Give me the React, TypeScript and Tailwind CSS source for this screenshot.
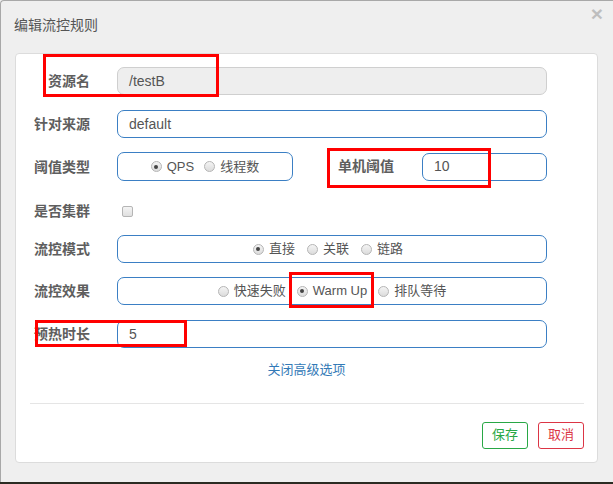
import React from "react";

const LABEL =
  "w-[74px] shrink-0 text-right text-[14px] font-bold text-[#5e5e5e] leading-none";
const BOX = "border border-[#3b7fc4] rounded-[7px] bg-white";

const Radio = ({ checked, label }: { checked?: boolean; label: string }) => (
  <span className="flex items-center">
    <span className="w-[11px] h-[11px] rounded-full border border-[#b5b5b5] bg-gradient-to-b from-[#f4f4f4] to-[#dcdcdc] flex items-center justify-center">
      {checked && <span className="w-[4px] h-[4px] rounded-full bg-[#444]" />}
    </span>
    <span className="ml-[5px] text-[13px] text-[#555]">{label}</span>
  </span>
);

const Row = ({
  label,
  children,
  className = "",
}: {
  label: string;
  children: React.ReactNode;
  className?: string;
}) => (
  <div className={`flex items-center ${className}`}>
    <div className={LABEL}>{label}</div>
    <div className="ml-[27px] flex-1 flex items-center">{children}</div>
  </div>
);

const App: React.FC = () => {
  return (
    <div
      className="relative w-[613px] h-[484px] overflow-hidden bg-[#efefef]"
      style={{ fontFamily: '"Liberation Sans", "Noto Sans CJK SC", sans-serif' }}
    >
      <div className="h-[482px] border-l border-t border-[#a8a8a8] rounded-tl-[4px] flex flex-col">
        {/* header */}
        <div className="h-[52px] flex items-center justify-between pl-[13px] pr-[10px] pb-[4px]">
          <span className="text-[14px] text-[#555]">编辑流控规则</span>
          <span className="text-[21px] font-bold text-black opacity-20 leading-none -mt-[24px]">
            ×
          </span>
        </div>

        {/* body panel */}
        <div className="ml-[14px] mr-[15px] h-[410px] bg-white border border-[#dcdcdc] rounded-[4px] pt-[13px] pr-[50px]">
          <Row label="资源名">
            <div className="h-[28px] w-full border border-[#cfcfcf] rounded-[7px] bg-[#eeeeee] flex items-center pl-[11px] text-[14px] text-[#555]">
              /testB
            </div>
          </Row>

          <Row label="针对来源" className="mt-[15px]">
            <div className={`h-[28px] w-full ${BOX} flex items-center pl-[11px] text-[14px] text-[#555]`}>
              default
            </div>
          </Row>

          <Row label="阈值类型" className="mt-[14px]">
            <div className={`h-[29px] w-[176px] ${BOX} flex items-center justify-center gap-[10px]`}>
              <Radio checked label="QPS" />
              <Radio label="线程数" />
            </div>
            <div className="ml-[45px] text-[14px] font-bold text-[#5e5e5e]">单机阈值</div>
            <div className={`ml-[28px] h-[28px] flex-1 ${BOX} flex items-center pl-[11px] text-[14px] text-[#555]`}>
              10
            </div>
          </Row>

          <Row label="是否集群" className="mt-[20px] h-[20px]">
            <span className="ml-[5px] w-[11px] h-[11px] rounded-[2px] border border-[#b5b5b5] bg-gradient-to-b from-[#f4f4f4] to-[#e0e0e0]" />
          </Row>

          <Row label="流控模式" className="mt-[14px]">
            <div className={`h-[28px] w-full ${BOX} flex items-center justify-center gap-[12px] pr-[8px]`}>
              <Radio checked label="直接" />
              <Radio label="关联" />
              <Radio label="链路" />
            </div>
          </Row>

          <Row label="流控效果" className="mt-[14px]">
            <div className={`h-[28px] w-full ${BOX} flex items-center justify-center gap-[11px]`}>
              <Radio label="快速失败" />
              <Radio checked label="Warm Up" />
              <Radio label="排队等待" />
            </div>
          </Row>

          <Row label="预热时长" className="mt-[15px]">
            <div className={`h-[28px] w-full ${BOX} flex items-center pl-[11px] text-[14px] text-[#555]`}>
              5
            </div>
          </Row>

          <div className="mr-[-50px] mt-[12px] text-center text-[13px] text-[#337ab7]">
            关闭高级选项
          </div>

          <div className="ml-[14px] mr-[-37px] mt-[23px] border-t border-[#e5e5e5]" />

          <div className="mr-[-37px] mt-[18px] flex justify-end gap-[10px]">
            <button className="w-[46px] h-[27px] border border-[#28a745] rounded-[3px] text-[13px] text-[#28a745] bg-white">
              保存
            </button>
            <button className="w-[46px] h-[27px] border border-[#dc3545] rounded-[3px] text-[13px] text-[#dc3545] bg-white">
              取消
            </button>
          </div>
        </div>
      </div>
      <div className="h-[2px] bg-[#2b2b22]" />

      {/* red annotation boxes */}
      <div className="absolute left-[43px] top-[54px] w-[176px] h-[43px] border-[3px] border-[#ff0000]" />
      <div className="absolute left-[327px] top-[148px] w-[164px] h-[40px] border-[3px] border-[#ff0000]" />
      <div className="absolute left-[289px] top-[272px] w-[85px] h-[36px] border-[3px] border-[#ff0000]" />
      <div className="absolute left-[35px] top-[320px] w-[152px] h-[27px] border-[3px] border-[#ff0000]" />
    </div>
  );
};

export default App;
